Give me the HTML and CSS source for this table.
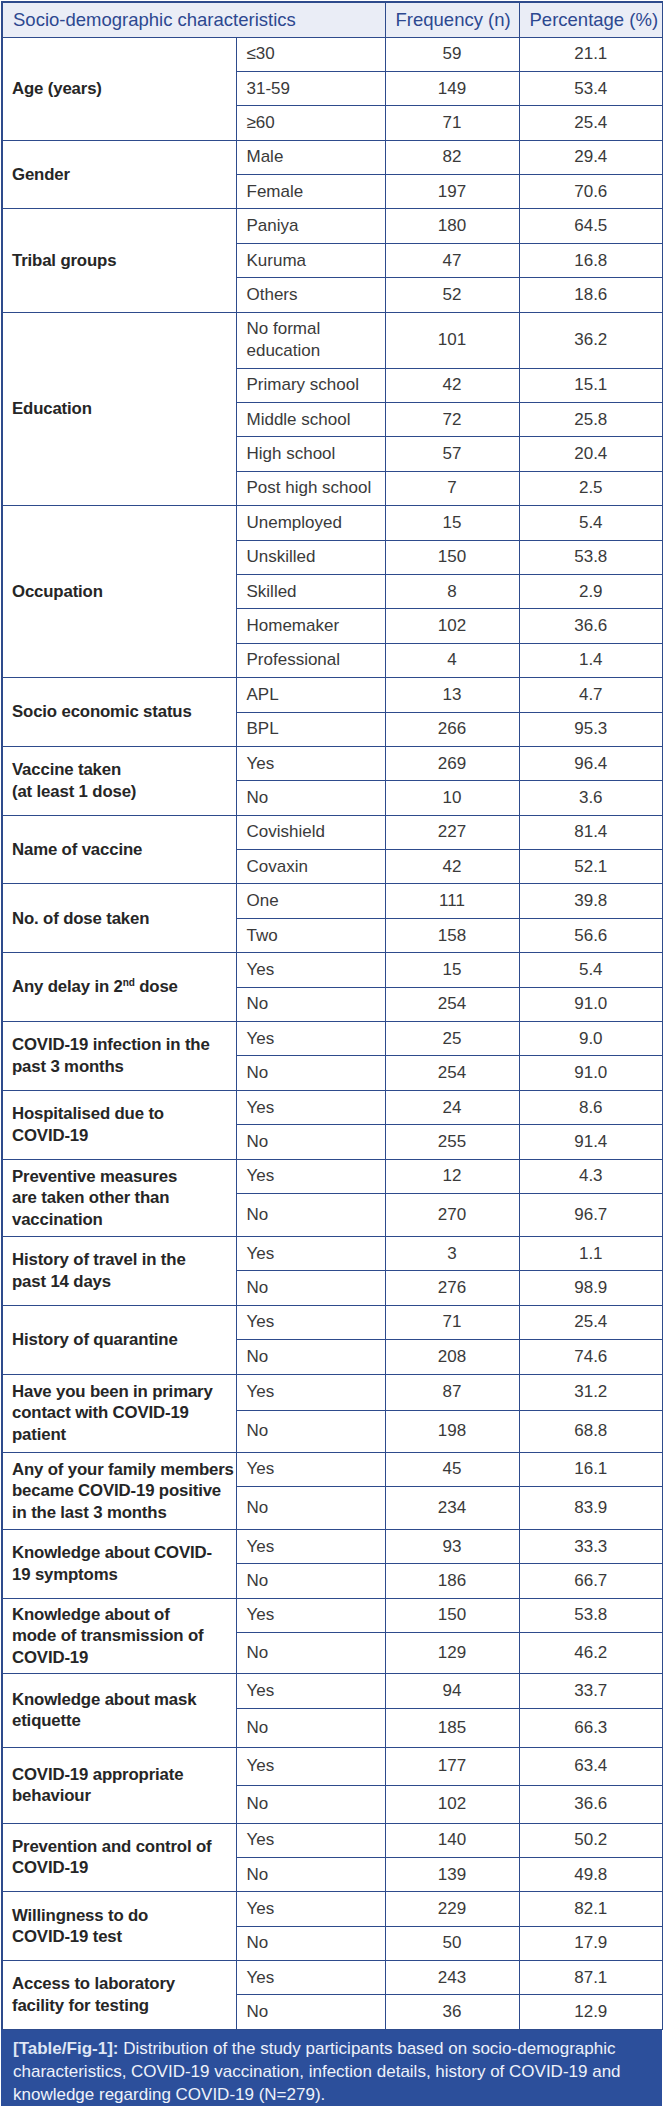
FILE: index.html
```html
<!DOCTYPE html>
<html lang="en">
<head>
<meta charset="utf-8">
<title>Table/Fig-1</title>
<link rel="stylesheet" href="styles.css">
</head>
<body>
<div class="figure">
<table class="data">
  <colgroup>
    <col class="c1"><col class="c2"><col class="c3"><col class="c4">
  </colgroup>
  <thead>
    <tr class="head">
      <th class="hl" colspan="2">Socio-demographic characteristics</th>
      <th>Frequency (n)</th>
      <th>Percentage (%)</th>
    </tr>
  </thead>
  <tbody>
    <tr><td class="lab" rowspan="3">Age (years)</td><td class="sub">≤30</td><td class="num">59</td><td class="num">21.1</td></tr>
    <tr><td class="sub">31-59</td><td class="num">149</td><td class="num">53.4</td></tr>
    <tr><td class="sub">≥60</td><td class="num">71</td><td class="num">25.4</td></tr>

    <tr><td class="lab" rowspan="2">Gender</td><td class="sub">Male</td><td class="num">82</td><td class="num">29.4</td></tr>
    <tr><td class="sub">Female</td><td class="num">197</td><td class="num">70.6</td></tr>

    <tr><td class="lab" rowspan="3">Tribal groups</td><td class="sub">Paniya</td><td class="num">180</td><td class="num">64.5</td></tr>
    <tr><td class="sub">Kuruma</td><td class="num">47</td><td class="num">16.8</td></tr>
    <tr><td class="sub">Others</td><td class="num">52</td><td class="num">18.6</td></tr>

    <tr class="h56"><td class="lab" rowspan="5">Education</td><td class="sub">No formal<br>education</td><td class="num">101</td><td class="num">36.2</td></tr>
    <tr><td class="sub">Primary school</td><td class="num">42</td><td class="num">15.1</td></tr>
    <tr><td class="sub">Middle school</td><td class="num">72</td><td class="num">25.8</td></tr>
    <tr><td class="sub">High school</td><td class="num">57</td><td class="num">20.4</td></tr>
    <tr><td class="sub">Post high school</td><td class="num">7</td><td class="num">2.5</td></tr>

    <tr><td class="lab" rowspan="5">Occupation</td><td class="sub">Unemployed</td><td class="num">15</td><td class="num">5.4</td></tr>
    <tr><td class="sub">Unskilled</td><td class="num">150</td><td class="num">53.8</td></tr>
    <tr><td class="sub">Skilled</td><td class="num">8</td><td class="num">2.9</td></tr>
    <tr><td class="sub">Homemaker</td><td class="num">102</td><td class="num">36.6</td></tr>
    <tr><td class="sub">Professional</td><td class="num">4</td><td class="num">1.4</td></tr>

    <tr><td class="lab" rowspan="2">Socio economic status</td><td class="sub">APL</td><td class="num">13</td><td class="num">4.7</td></tr>
    <tr><td class="sub">BPL</td><td class="num">266</td><td class="num">95.3</td></tr>

    <tr><td class="lab" rowspan="2">Vaccine taken<br>(at least 1 dose)</td><td class="sub">Yes</td><td class="num">269</td><td class="num">96.4</td></tr>
    <tr><td class="sub">No</td><td class="num">10</td><td class="num">3.6</td></tr>

    <tr><td class="lab" rowspan="2">Name of vaccine</td><td class="sub">Covishield</td><td class="num">227</td><td class="num">81.4</td></tr>
    <tr><td class="sub">Covaxin</td><td class="num">42</td><td class="num">52.1</td></tr>

    <tr><td class="lab" rowspan="2">No. of dose taken</td><td class="sub">One</td><td class="num">111</td><td class="num">39.8</td></tr>
    <tr><td class="sub">Two</td><td class="num">158</td><td class="num">56.6</td></tr>

    <tr><td class="lab" rowspan="2">Any delay in 2<sup>nd</sup> dose</td><td class="sub">Yes</td><td class="num">15</td><td class="num">5.4</td></tr>
    <tr><td class="sub">No</td><td class="num">254</td><td class="num">91.0</td></tr>

    <tr><td class="lab" rowspan="2">COVID-19 infection in the<br>past 3 months</td><td class="sub">Yes</td><td class="num">25</td><td class="num">9.0</td></tr>
    <tr><td class="sub">No</td><td class="num">254</td><td class="num">91.0</td></tr>

    <tr><td class="lab" rowspan="2">Hospitalised due to<br>COVID-19</td><td class="sub">Yes</td><td class="num">24</td><td class="num">8.6</td></tr>
    <tr><td class="sub">No</td><td class="num">255</td><td class="num">91.4</td></tr>

    <tr><td class="lab" rowspan="2">Preventive measures<br>are taken other than<br>vaccination</td><td class="sub">Yes</td><td class="num">12</td><td class="num">4.3</td></tr>
    <tr class="h43"><td class="sub">No</td><td class="num">270</td><td class="num">96.7</td></tr>

    <tr><td class="lab" rowspan="2">History of travel in the<br>past 14 days</td><td class="sub">Yes</td><td class="num">3</td><td class="num">1.1</td></tr>
    <tr><td class="sub">No</td><td class="num">276</td><td class="num">98.9</td></tr>

    <tr><td class="lab" rowspan="2">History of quarantine</td><td class="sub">Yes</td><td class="num">71</td><td class="num">25.4</td></tr>
    <tr><td class="sub">No</td><td class="num">208</td><td class="num">74.6</td></tr>

    <tr class="h36"><td class="lab" rowspan="2">Have you been in primary<br>contact with COVID-19<br>patient</td><td class="sub">Yes</td><td class="num">87</td><td class="num">31.2</td></tr>
    <tr class="h42"><td class="sub">No</td><td class="num">198</td><td class="num">68.8</td></tr>

    <tr><td class="lab" rowspan="2">Any of your family members<br>became COVID-19 positive<br>in the last 3 months</td><td class="sub">Yes</td><td class="num">45</td><td class="num">16.1</td></tr>
    <tr class="h43"><td class="sub">No</td><td class="num">234</td><td class="num">83.9</td></tr>

    <tr><td class="lab" rowspan="2">Knowledge about COVID-<br>19 symptoms</td><td class="sub">Yes</td><td class="num">93</td><td class="num">33.3</td></tr>
    <tr><td class="sub">No</td><td class="num">186</td><td class="num">66.7</td></tr>

    <tr><td class="lab" rowspan="2">Knowledge about of<br>mode of transmission of<br>COVID-19</td><td class="sub">Yes</td><td class="num">150</td><td class="num">53.8</td></tr>
    <tr class="h41"><td class="sub">No</td><td class="num">129</td><td class="num">46.2</td></tr>

    <tr><td class="lab" rowspan="2">Knowledge about mask<br>etiquette</td><td class="sub">Yes</td><td class="num">94</td><td class="num">33.7</td></tr>
    <tr class="h39"><td class="sub">No</td><td class="num">185</td><td class="num">66.3</td></tr>

    <tr class="h38"><td class="lab" rowspan="2">COVID-19 appropriate<br>behaviour</td><td class="sub">Yes</td><td class="num">177</td><td class="num">63.4</td></tr>
    <tr class="h38"><td class="sub">No</td><td class="num">102</td><td class="num">36.6</td></tr>

    <tr><td class="lab" rowspan="2">Prevention and control of<br>COVID-19</td><td class="sub">Yes</td><td class="num">140</td><td class="num">50.2</td></tr>
    <tr><td class="sub">No</td><td class="num">139</td><td class="num">49.8</td></tr>

    <tr><td class="lab" rowspan="2">Willingness to do<br>COVID-19 test</td><td class="sub">Yes</td><td class="num">229</td><td class="num">82.1</td></tr>
    <tr><td class="sub">No</td><td class="num">50</td><td class="num">17.9</td></tr>

    <tr><td class="lab" rowspan="2">Access to laboratory<br>facility for testing</td><td class="sub">Yes</td><td class="num">243</td><td class="num">87.1</td></tr>
    <tr><td class="sub">No</td><td class="num">36</td><td class="num">12.9</td></tr>
  </tbody>
</table>
<p class="caption"><b>[Table/Fig-1]:</b> Distribution of the study participants based on socio-demographic characteristics, COVID-19 vaccination, infection details, history of COVID-19 and knowledge regarding COVID-19 (N=279).</p>
</div>
</body>
</html>
```

FILE: styles.css
```css
html, body {
  margin: 0;
  padding: 0;
  background: #ffffff;
}

.figure {
  width: 661px;
  margin: 1px 0 0 1px;
  font-family: "Liberation Sans", Arial, sans-serif;
}

.data {
  width: 100%;
  border-collapse: collapse;
  table-layout: fixed;
  border: 2px solid #2e4b8c;
  border-bottom: none;
}

.c1 { width: 234px; }
.c2 { width: 149px; }
.c3 { width: 134px; }
.c4 { width: 144px; }

.data th,
.data td {
  border: 1px solid #2e4b8c;
  padding: 0 10px;
  vertical-align: middle;
}

.head {
  height: 35px;
  background: #eaedf6;
}

.head th {
  font-size: 18.5px;
  font-weight: normal;
  color: #2d4890;
  text-align: center;
  white-space: nowrap;
}

.head th.hl {
  text-align: left;
}

.data tbody tr {
  height: 34.4px;
}

.data tbody tr.h56 { height: 56px; }
.data tbody tr.h43 { height: 43px; }
.data tbody tr.h42 { height: 42px; }
.data tbody tr.h41 { height: 41px; }
.data tbody tr.h39 { height: 39px; }
.data tbody tr.h38 { height: 38px; }
.data tbody tr.h36 { height: 36px; }

.data td.lab {
  padding: 0 2px 0 9px;
  font-size: 16.8px;
  letter-spacing: -0.15px;
  font-weight: bold;
  color: #262626;
  line-height: 21.5px;
  white-space: nowrap;
}

.lab sup {
  font-size: 10px;
  line-height: 0;
  vertical-align: 6px;
}

.sub {
  font-size: 17px;
  color: #3a3a3a;
  line-height: 22px;
  text-align: left;
}

.num {
  font-size: 17px;
  color: #3a3a3a;
  text-align: center;
  line-height: 22px;
}

.caption {
  margin: 0;
  background: #2c4f9b;
  color: #eef2fa;
  font-size: 17px;
  line-height: 23px;
  padding: 7px 12px 6px 12px;
}

.caption b {
  color: #dfe6f5;
}
```
